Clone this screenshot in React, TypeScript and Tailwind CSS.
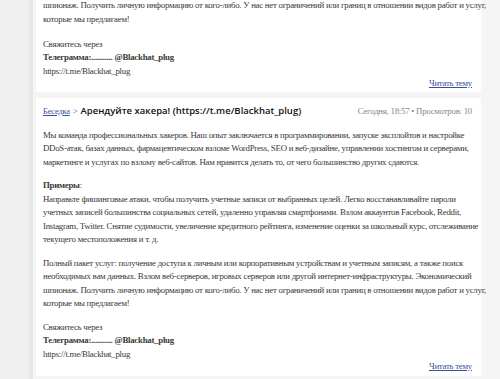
const serif = { fontFamily: '"Liberation Serif", "Times New Roman", serif' };

const tailLines = [
  "шпионаж. Получить личную информацию от кого-либо. У нас нет ограничений или границ в отношении видов работ и услуг,",
  "которые мы предлагаем!",
];

const Gap = () => <div className="h-[10px]" />;

const Contacts = () => (
  <div>
    <p>Свяжитесь через</p>
    <p className="font-bold">Телеграмма:........... @Blackhat_plug</p>
    <p>https://t.me/Blackhat_plug</p>
  </div>
);

const ReadMore = () => (
  <div className="flex justify-end -mt-[1.5px]">
    <a href="#" className="text-[#3b4f9c] underline">
      Читать тему
    </a>
  </div>
);

const Line = ({ children }: { children: React.ReactNode }) => (
  <p className="whitespace-nowrap">{children}</p>
);

export default function App() {
  return (
    <div
      className="w-[500px] h-[379px] overflow-hidden flex bg-[#f5f5f5] text-[8.8px] leading-[13.5px] tracking-[-0.25px] text-[#383838]"
      style={serif}
    >
      <aside className="w-[33px] shrink-0 bg-[#f0f0f0] border-r-4 border-[#e7e7e7]" />
      <main className="flex-1 min-w-0 pl-[3px] pr-[19px] flex flex-col gap-[6px] -mt-[1px]">
        {/* хвост предыдущей темы */}
        <article className="bg-white pl-[7px] pr-[9px] pb-[2px]">
          {tailLines.map((l) => (
            <Line key={l}>{l}</Line>
          ))}
          <div className="h-[11.5px]" />
          <Contacts />
          <ReadMore />
        </article>

        <article className="bg-white pl-[7px] pr-[9px] pt-[6px] pb-[3px]">
          <header className="flex items-baseline justify-between">
            <div className="flex items-baseline gap-[3px] whitespace-nowrap">
              <a href="#" className="text-[#3b4f9c] underline text-[8.5px]">
                Беседка
              </a>
              <span className="text-[#555]">&gt;</span>
              <h2
                className="font-semibold text-[9.5px] tracking-normal text-[#111]"
                style={{ fontFamily: '"Open Sans", "Liberation Sans", sans-serif' }}
              >
                Арендуйте хакера! (https://t.me/Blackhat_plug)
              </h2>
            </div>
            <span className="text-[#888] whitespace-nowrap">Сегодня, 18:57 • Просмотров: 10</span>
          </header>

          <div className="mt-[10px]">
            <Line>
              Мы команда профессиональных хакеров. Наш опыт заключается в программировании, запуске эксплойтов и настройке
            </Line>
            <Line>
              DDoS-атак, базах данных, фармацевтическом взломе WordPress, SEO и веб-дизайне, управлении хостингом и серверами,
            </Line>
            <Line>
              маркетинге и услугах по взлому веб-сайтов. Нам нравится делать то, от чего большинство других сдаются.
            </Line>
            <Gap />
            <p>
              <b>Примеры</b>:
            </p>
            <Line>
              Направьте фишинговые атаки, чтобы получить учетные записи от выбранных целей. Легко восстанавливайте пароли
            </Line>
            <Line>
              учетных записей большинства социальных сетей, удаленно управляя смартфонами. Взлом аккаунтов Facebook, Reddit,
            </Line>
            <Line>
              Instagram, Twitter. Снятие судимости, увеличение кредитного рейтинга, изменение оценки за школьный курс, отслеживание
            </Line>
            <Line>текущего местоположения и т. д.</Line>
            <Gap />
            <Line>
              Полный пакет услуг: получение доступа к личным или корпоративным устройствам и учетным записям, а также поиск
            </Line>
            <Line>
              необходимых вам данных. Взлом веб-серверов, игровых серверов или другой интернет-инфраструктуры. Экономический
            </Line>
            {tailLines.map((l) => (
              <Line key={l}>{l}</Line>
            ))}
            <Gap />
            <Contacts />
            <ReadMore />
          </div>
        </article>
      </main>
    </div>
  );
}
